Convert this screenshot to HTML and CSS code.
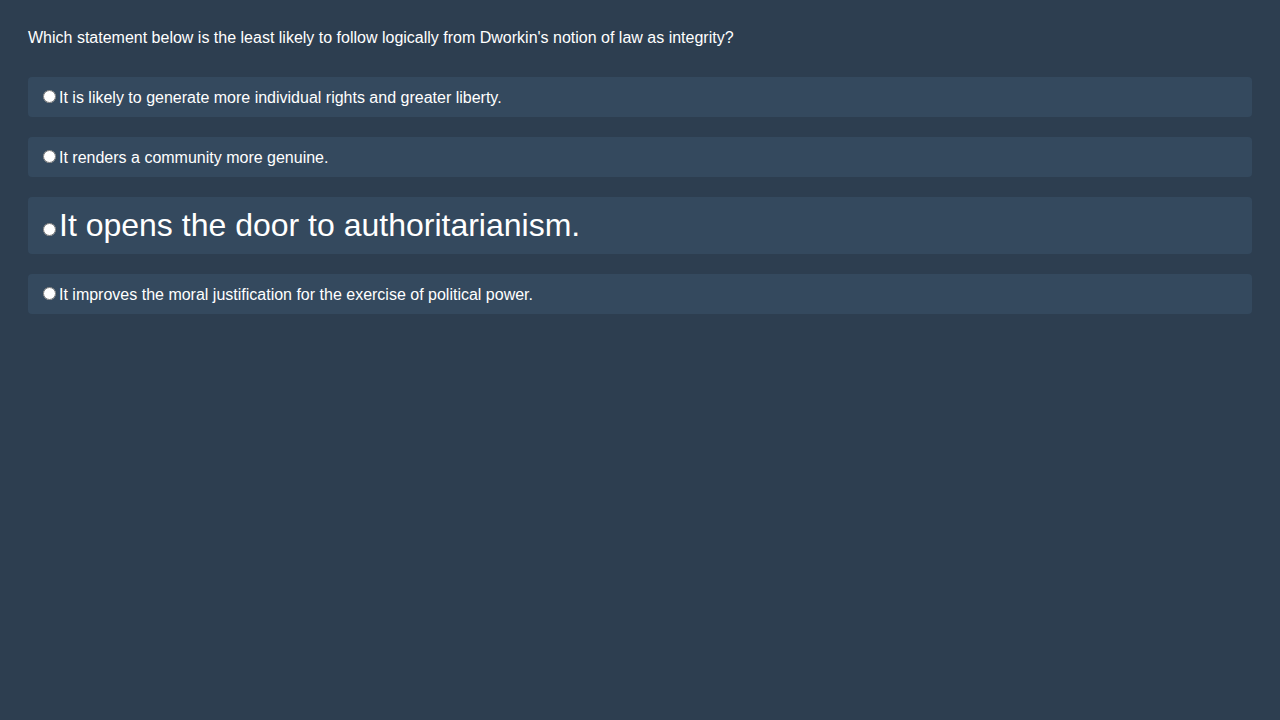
FILE: index.html
```html
<!DOCTYPE html>
<html>
<head>
<meta charset="utf-8">
<link rel="stylesheet" href="styles.css">
</head>
<body>
<div class="quiz">
  <p class="question">Which statement below is the least likely to follow logically from Dworkin's notion of law as integrity?</p>
  <div class="options">
    <label class="option"><input type="radio" name="a">It is likely to generate more individual rights and greater liberty.</label>
    <label class="option"><input type="radio" name="a">It renders a community more genuine.</label>
    <label class="option big"><input type="radio" name="a">It opens the door to authoritarianism.</label>
    <label class="option"><input type="radio" name="a">It improves the moral justification for the exercise of political power.</label>
  </div>
</div>
</body>
</html>
```
FILE: styles.css
```css
html, body {
  background: #2d3e50;
}
body {
  margin: 8px;
  font-family: "Liberation Sans", Arial, sans-serif;
  font-size: 16px;
  color: #ffffff;
}
.quiz {
  padding: 20px;
}
.question {
  margin: 0 0 29px 0;
  line-height: 20px;
}
.options {
  display: flex;
  flex-direction: column;
  gap: 20px;
}
.option {
  display: block;
  background: #34495e;
  border-radius: 4px;
  padding: 10px;
}
.option.big {
  font-size: 32px;
}
```
